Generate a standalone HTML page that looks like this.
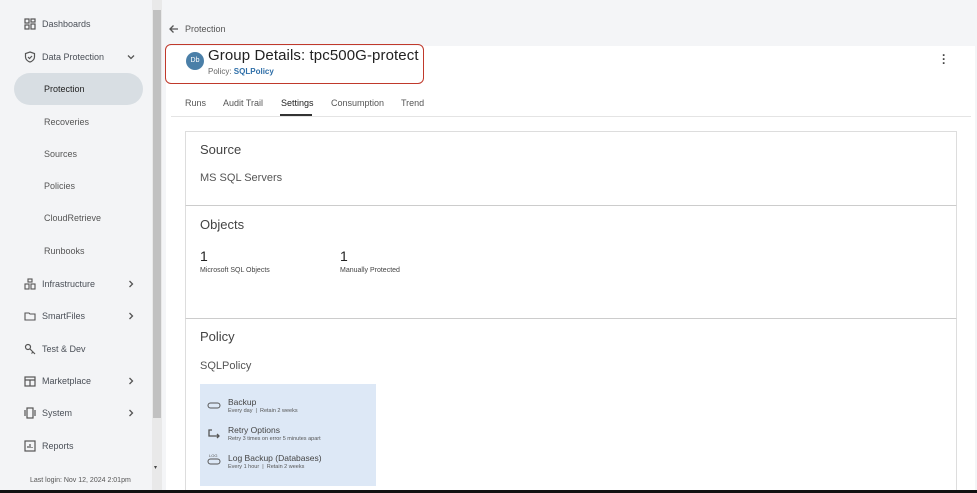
<!DOCTYPE html>
<html><head><style>
*{margin:0;padding:0;box-sizing:border-box}
body{width:977px;height:493px;overflow:hidden;background:#f4f5f7;font-family:"Liberation Sans",sans-serif;position:relative;color:#333}
.sb{position:absolute;left:0;top:0;width:152px;height:490px;background:#f3f4f6}
.it{position:absolute;left:24px;font-size:9px;color:#4a4f57;display:flex;align-items:center}
.it svg{width:12px;height:12px;margin-right:6px}
.sub{position:absolute;left:44px;font-size:9px;color:#555}
.chev{position:absolute;left:127px;width:8px;height:8px}
.scr{position:absolute;left:152px;top:0;width:10px;height:490px;background:#e9e9e9}
.thumb{position:absolute;left:153px;top:10px;width:8px;height:408px;background:#c1c1c1}
.main{position:absolute;left:166px;top:46px;width:809px;height:444px;background:#fff}
.card{position:absolute;left:185px;width:772px;border:1px solid #ddd;border-bottom:none;background:#fff}
.h{font-size:13px;color:#444;position:absolute;left:14px}
.black{position:absolute;left:0;top:490px;width:977px;height:3px;background:#111}
</style></head><body>
<div class="sb"></div>
<div class="it" style="top:18px"><svg viewBox="0 0 12 12" fill="none" stroke="#555" stroke-width="1.2"><rect x="1" y="1" width="4" height="4"/><rect x="7" y="1" width="4" height="3"/><rect x="1" y="7" width="4" height="4"/><rect x="7" y="6" width="4" height="5"/></svg>Dashboards</div>
<div class="it" style="top:51px"><svg viewBox="0 0 12 12" fill="none" stroke="#555" stroke-width="1.2"><path d="M6 1L10.5 2.5V6C10.5 8.5 8 10.5 6 11 4 10.5 1.5 8.5 1.5 6V2.5Z"/><path d="M4 6l1.5 1.5L8 5"/></svg>Data Protection</div>
<svg class="chev" style="top:53px" viewBox="0 0 8 8"><path d="M1 2.5l3 3 3-3" fill="none" stroke="#555" stroke-width="1.3"/></svg>
<div style="position:absolute;left:14px;top:73px;width:129px;height:32px;border-radius:16px;background:#d8dee3"></div>
<div class="sub" style="top:84px;color:#222">Protection</div>
<div class="sub" style="top:117px">Recoveries</div>
<div class="sub" style="top:149px">Sources</div>
<div class="sub" style="top:181px">Policies</div>
<div class="sub" style="top:213px">CloudRetrieve</div>
<div class="sub" style="top:246px">Runbooks</div>
<div class="it" style="top:278px"><svg viewBox="0 0 12 12" fill="none" stroke="#555" stroke-width="1.1"><rect x="4" y="1" width="4" height="3"/><rect x="1" y="6" width="4" height="5"/><rect x="7" y="6" width="4" height="5"/></svg>Infrastructure</div>
<svg class="chev" style="top:280px" viewBox="0 0 8 8"><path d="M2.5 1l3 3-3 3" fill="none" stroke="#555" stroke-width="1.3"/></svg>
<div class="it" style="top:310px"><svg viewBox="0 0 12 12" fill="none" stroke="#555" stroke-width="1.1"><path d="M1 3h4l1 1h5v6H1Z"/></svg>SmartFiles</div>
<svg class="chev" style="top:312px" viewBox="0 0 8 8"><path d="M2.5 1l3 3-3 3" fill="none" stroke="#555" stroke-width="1.3"/></svg>
<div class="it" style="top:343px"><svg viewBox="0 0 12 12" fill="none" stroke="#555" stroke-width="1.2"><circle cx="4" cy="4" r="2.5"/><path d="M6 6l5 5M9 9l-1.5 1.5"/></svg>Test &amp; Dev</div>
<div class="it" style="top:375px"><svg viewBox="0 0 12 12" fill="none" stroke="#555" stroke-width="1.2"><rect x="1" y="2" width="10" height="9"/><path d="M1 5h10M6 5v6"/></svg>Marketplace</div>
<svg class="chev" style="top:377px" viewBox="0 0 8 8"><path d="M2.5 1l3 3-3 3" fill="none" stroke="#555" stroke-width="1.3"/></svg>
<div class="it" style="top:407px"><svg viewBox="0 0 12 12" fill="none" stroke="#555" stroke-width="1.2"><rect x="3" y="1" width="6" height="10"/><path d="M1 3v6M11 3v6"/></svg>System</div>
<svg class="chev" style="top:409px" viewBox="0 0 8 8"><path d="M2.5 1l3 3-3 3" fill="none" stroke="#555" stroke-width="1.3"/></svg>
<div class="it" style="top:440px"><svg viewBox="0 0 12 12" fill="none" stroke="#555" stroke-width="1.2"><rect x="1" y="1" width="10" height="10"/><path d="M4 8V6M6 8V4M8 8V7"/></svg>Reports</div>
<div style="position:absolute;left:30px;top:477px;font-size:7px;color:#555">Last login: Nov 12, 2024 2:01pm</div>
<div class="scr"></div><div class="thumb"></div>
<div style="position:absolute;left:154px;top:464px;font-size:6px;color:#444">▾</div>

<svg style="position:absolute;left:168px;top:24px" width="11" height="10"><path d="M10 5H2M5.5 1.5L2 5l3.5 3.5" fill="none" stroke="#555" stroke-width="1.3"/></svg>
<div style="position:absolute;left:185px;top:24px;font-size:9px;color:#555">Protection</div>
<div class="main"></div>
<div style="position:absolute;left:165px;top:44px;width:259px;height:40px;border:1.5px solid #c0392b;border-radius:6px"></div>
<div style="position:absolute;left:186px;top:52px;width:18px;height:18px;border-radius:50%;background:#4a7fa8;color:#fff;font-size:7px;text-align:center;line-height:18px">Db</div>
<div style="position:absolute;left:208px;top:47px;font-size:15px;letter-spacing:0.1px;color:#222">Group Details: tpc500G-protect</div>
<div style="position:absolute;left:208px;top:67px;font-size:8px;color:#666">Policy: <span style="color:#2f6fa8;font-weight:bold">SQLPolicy</span></div>
<div style="position:absolute;left:942px;top:53px;font-size:12px;color:#444;font-weight:bold;line-height:4px">·<br>·<br>·</div>
<div style="position:absolute;top:98px;left:185px;font-size:9px;color:#555">Runs</div>
<div style="position:absolute;top:98px;left:223px;font-size:9px;color:#555">Audit Trail</div>
<div style="position:absolute;top:98px;left:281px;font-size:9px;color:#222">Settings</div>
<div style="position:absolute;top:114px;left:280px;width:32px;height:2px;background:#333"></div>
<div style="position:absolute;top:98px;left:331px;font-size:9px;color:#555">Consumption</div>
<div style="position:absolute;top:98px;left:401px;font-size:9px;color:#555">Trend</div>
<div style="position:absolute;top:116px;left:171px;width:800px;height:1px;background:#e4e4e4"></div>

<div class="card" style="top:131px;height:75px"><div class="h" style="top:10px">Source</div><div style="position:absolute;left:14px;top:40px;font-size:11px;color:#555">MS SQL Servers</div></div>
<div class="card" style="top:205px;height:114px;border-top-color:#ccc"><div class="h" style="top:11px">Objects</div>
<div style="position:absolute;left:14px;top:42px;font-size:14px;color:#222">1</div><div style="position:absolute;left:14px;top:61px;font-size:7px;color:#444">Microsoft SQL Objects</div>
<div style="position:absolute;left:154px;top:42px;font-size:14px;color:#222">1</div><div style="position:absolute;left:154px;top:61px;font-size:7px;color:#444">Manually Protected</div></div>
<div class="card" style="top:318px;height:172px;border-top-color:#ccc"><div class="h" style="top:10px">Policy</div><div style="position:absolute;left:14px;top:41px;font-size:11px;color:#555">SQLPolicy</div>
<div style="position:absolute;left:14px;top:65px;width:176px;height:102px;background:#dde8f6">
<svg style="position:absolute;left:7px;top:18px" width="14" height="8"><rect x="1" y="1" width="12" height="5" rx="2.5" fill="none" stroke="#555"/></svg>
<div style="position:absolute;left:28px;top:13px;font-size:8.5px;color:#444">Backup</div><div style="position:absolute;left:28px;top:24px;font-size:5.5px;color:#555">Every day &nbsp;| &nbsp;Retain 2 weeks</div>
<svg style="position:absolute;left:7px;top:45px" width="14" height="10"><path d="M5 1H2V7H12M10 5l2 2-2 2" fill="none" stroke="#555" stroke-width="1.3"/></svg>
<div style="position:absolute;left:28px;top:41px;font-size:8.5px;color:#444">Retry Options</div><div style="position:absolute;left:28px;top:52px;font-size:5.5px;color:#555">Retry 3 times on error 5 minutes apart</div>
<svg style="position:absolute;left:7px;top:69px" width="14" height="13"><text x="2" y="4" font-size="4" fill="#555">LOG</text><rect x="1" y="6" width="12" height="5" rx="2.5" fill="none" stroke="#555"/></svg>
<div style="position:absolute;left:28px;top:69px;font-size:8.5px;color:#444">Log Backup (Databases)</div><div style="position:absolute;left:28px;top:80px;font-size:5.5px;color:#555">Every 1 hour &nbsp;| &nbsp;Retain 2 weeks</div>
</div></div>
<div class="black"></div>
</body></html>
